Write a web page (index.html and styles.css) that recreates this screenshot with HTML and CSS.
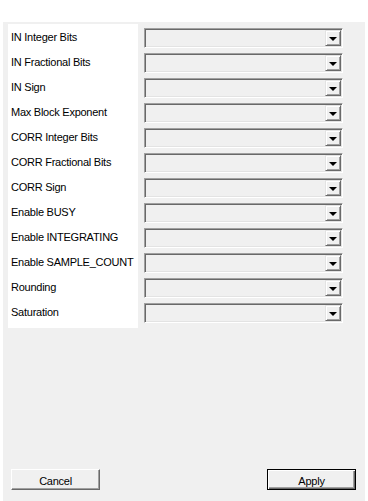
FILE: index.html
```html
<!DOCTYPE html>
<html lang="en">
<head>
    <meta charset="UTF-8">
    <title>Settings</title>
    <link rel="stylesheet" href="styles.css">
</head>
<body>
    <div class="dialog">
        <div class="form">
            <div class="labels">
                <div class="label">IN Integer Bits</div>
                <div class="label">IN Fractional Bits</div>
                <div class="label">IN Sign</div>
                <div class="label">Max Block Exponent</div>
                <div class="label">CORR Integer Bits</div>
                <div class="label">CORR Fractional Bits</div>
                <div class="label">CORR Sign</div>
                <div class="label">Enable BUSY</div>
                <div class="label">Enable INTEGRATING</div>
                <div class="label">Enable SAMPLE_COUNT</div>
                <div class="label">Rounding</div>
                <div class="label">Saturation</div>
            </div>
            <div class="combos">
                <div class="combo"><span class="drop"></span></div>
                <div class="combo"><span class="drop"></span></div>
                <div class="combo"><span class="drop"></span></div>
                <div class="combo"><span class="drop"></span></div>
                <div class="combo"><span class="drop"></span></div>
                <div class="combo"><span class="drop"></span></div>
                <div class="combo"><span class="drop"></span></div>
                <div class="combo"><span class="drop"></span></div>
                <div class="combo"><span class="drop"></span></div>
                <div class="combo"><span class="drop"></span></div>
                <div class="combo"><span class="drop"></span></div>
                <div class="combo"><span class="drop"></span></div>
            </div>
        </div>
        <div class="actions">
            <button class="btn">Cancel</button>
            <button class="btn default">Apply</button>
        </div>
    </div>
</body>
</html>
```

FILE: styles.css
```css
body {
    margin: 0;
    background: #fff;
    font-family: 'Liberation Sans', Arial, sans-serif;
    font-size: 11px;
    letter-spacing: -0.25px;
    color: #000;
}

.dialog {
    margin: 22px 0 0 3px;
    width: 362px;
    height: 479px;
    box-sizing: border-box;
    padding: 2px 9px 11px 5px;
    background: #f0f0f0;
    display: flex;
    flex-direction: column;
}

.form {
    display: flex;
    gap: 6px;
}

.labels {
    width: 130px;
    box-sizing: border-box;
    padding-left: 3px;
    background: #fff;
}

.label {
    height: 24px;
    padding-top: 1px;
    line-height: 25px;
    white-space: nowrap;
}

.combos {
    padding-top: 4px;
}

.combo {
    width: 199px;
    height: 20px;
    box-sizing: border-box;
    margin-bottom: 5px;
    border: 1px solid;
    border-color: #a0a0a0 #fff #fff #a0a0a0;
    box-shadow: inset 1px 1px #696969, inset -1px -1px #e3e3e3;
    background: #f0f0f0;
    display: flex;
    justify-content: flex-end;
    padding: 1px;
}

.drop {
    width: 16px;
    height: 16px;
    box-sizing: border-box;
    border: 1px solid;
    border-color: #e3e3e3 #696969 #696969 #e3e3e3;
    box-shadow: inset 1px 1px #fff, inset -1px -1px #a0a0a0;
    background: #f0f0f0;
    display: flex;
    align-items: center;
    justify-content: center;
}

.drop::after {
    content: '';
    margin-top: 1px;
    border-left: 4px solid transparent;
    border-right: 4px solid transparent;
    border-top: 4px solid #000;
}

.actions {
    margin-top: auto;
    display: flex;
    justify-content: space-between;
    padding-left: 3px;
}

.btn {
    width: 89px;
    height: 21px;
    padding: 2px 0 0;
    font-family: inherit;
    font-size: 11px;
    letter-spacing: -0.25px;
    color: #000;
    background: #f0f0f0;
    border: 1px solid;
    border-color: #fff #696969 #696969 #fff;
    box-shadow: inset -1px -1px #a0a0a0;
}

.btn.default {
    border: 1px solid #000;
    box-shadow: inset 1px 1px #fff, inset -1px -1px #696969, inset -2px -2px #a0a0a0;
}
```
